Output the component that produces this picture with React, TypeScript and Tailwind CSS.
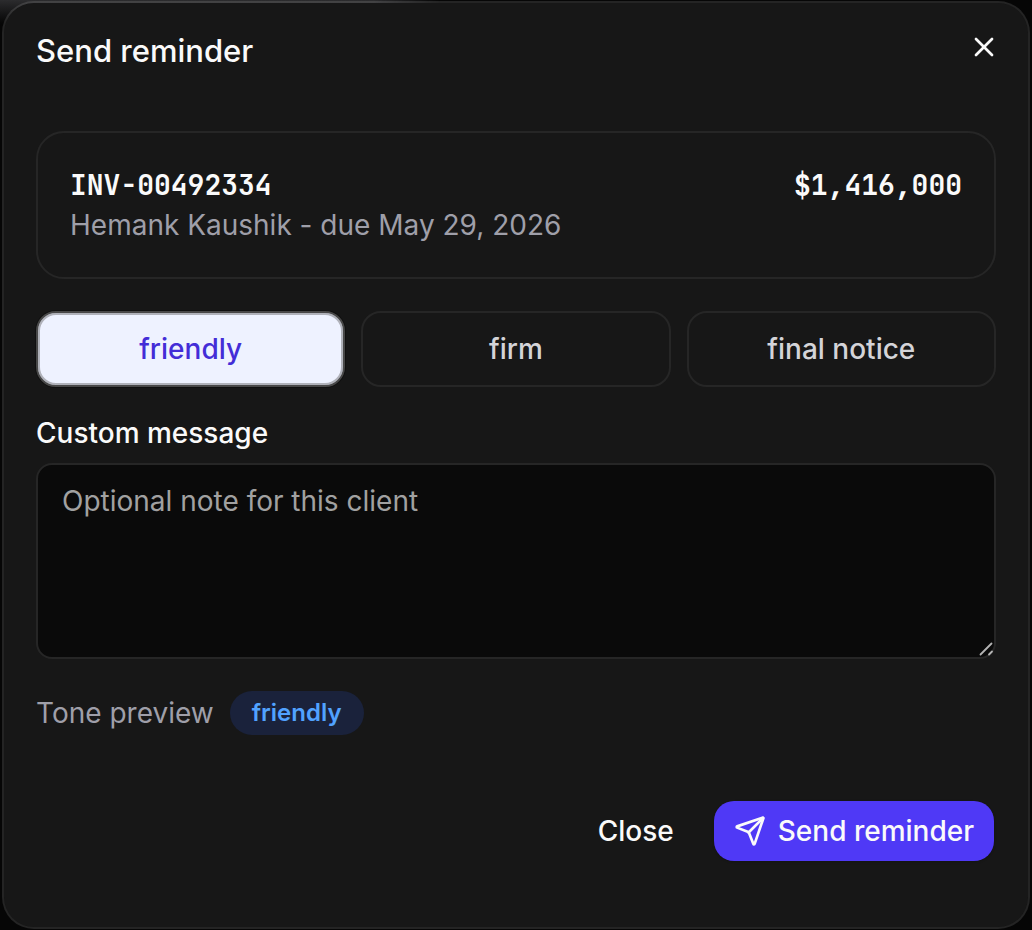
import { useState } from "react";
import { Send, X } from "lucide-react";

const tones = ["friendly", "firm", "final notice"];

export default function App() {
  const [tone, setTone] = useState("friendly");
  const [message, setMessage] = useState("");

  return (
    <div className="relative min-h-screen bg-[#060606] px-0.5 py-px font-['Inter',sans-serif] text-[28px] leading-10 text-neutral-50">
      <div className="absolute top-0 left-0 h-6 w-[440px] bg-linear-to-b from-[#2c2c2e] to-[#060606] mask-r-from-85%" />
      <section
        role="dialog"
        aria-labelledby="dialog-title"
        className="relative rounded-[32px] border-2 border-white/12 bg-[#171717] bg-clip-padding px-8 pt-7 pb-[66px]"
      >
        <header className="flex items-start justify-between">
          <h1 id="dialog-title" className="text-[31px] leading-10 font-medium">
            Send reminder
          </h1>
          <button type="button" aria-label="Close dialog" className="-mr-1 flex size-8">
            <X size={32} strokeWidth={2} />
          </button>
        </header>

        <div className="mt-[60px] flex items-start justify-between rounded-[28px] border-2 border-[#262626] p-8">
          <div>
            <p className="font-['JetBrains_Mono','Liberation_Mono',monospace] font-bold">INV-00492334</p>
            <p className="text-[#9f9fa9]">Hemank Kaushik - due May 29, 2026</p>
          </div>
          <p className="font-['JetBrains_Mono','Liberation_Mono',monospace] font-bold">$1,416,000</p>
        </div>

        <div className="mt-8 grid grid-cols-3 gap-4">
          {tones.map((name) => (
            <button
              key={name}
              type="button"
              aria-pressed={tone === name}
              onClick={() => setTone(name)}
              className={
                tone === name
                  ? "h-[76px] rounded-[20px] border-2 border-[#484848] bg-[#eef2ff] font-medium text-[#432dd7] inset-ring-2 inset-ring-[#b0b2ba] ring-1 ring-[#101010]"
                  : "h-[76px] rounded-[20px] border-2 border-[#262626] font-medium text-[#d4d4d8]"
              }
            >
              {name}
            </button>
          ))}
        </div>

        <label htmlFor="message" className="mt-7 block leading-9 font-medium">
          Custom message
        </label>
        <div className="relative mt-3">
          <textarea
            id="message"
            value={message}
            onChange={(event) => setMessage(event.target.value)}
            placeholder="Optional note for this client"
            className="block h-[196px] w-full resize-none rounded-2xl border-2 border-[#262626] bg-[#0a0a0a] px-6 py-4 placeholder:text-[#a1a1a1]"
          />
          <svg
            aria-hidden="true"
            viewBox="0 0 16 16"
            className="pointer-events-none absolute right-0.5 bottom-0.5 size-4 stroke-[#b4b4b4]"
            strokeWidth="1.8"
            strokeLinecap="round"
          >
            <path d="M2.5 13.5 13.5 2.5M11 13.5l3-3" />
          </svg>
        </div>

        <div className="mt-8 flex items-center gap-4">
          <span className="text-[#9f9fa9]">Tone preview</span>
          <span className="flex h-11 items-center rounded-full bg-[#1a223b] px-[22px] text-2xl font-semibold text-[#51a2ff]">
            {tone}
          </span>
        </div>

        <footer className="mt-[66px] flex items-center justify-end gap-4 pr-0.5">
          <button type="button" className="h-[60px] rounded-[20px] px-6 font-medium">
            Close
          </button>
          <button
            type="button"
            className="flex h-[60px] items-center gap-3 rounded-[20px] bg-[#4f39f6] px-5 font-medium shadow-sm"
          >
            <Send size={32} strokeWidth={2} />
            Send reminder
          </button>
        </footer>
      </section>
    </div>
  );
}
